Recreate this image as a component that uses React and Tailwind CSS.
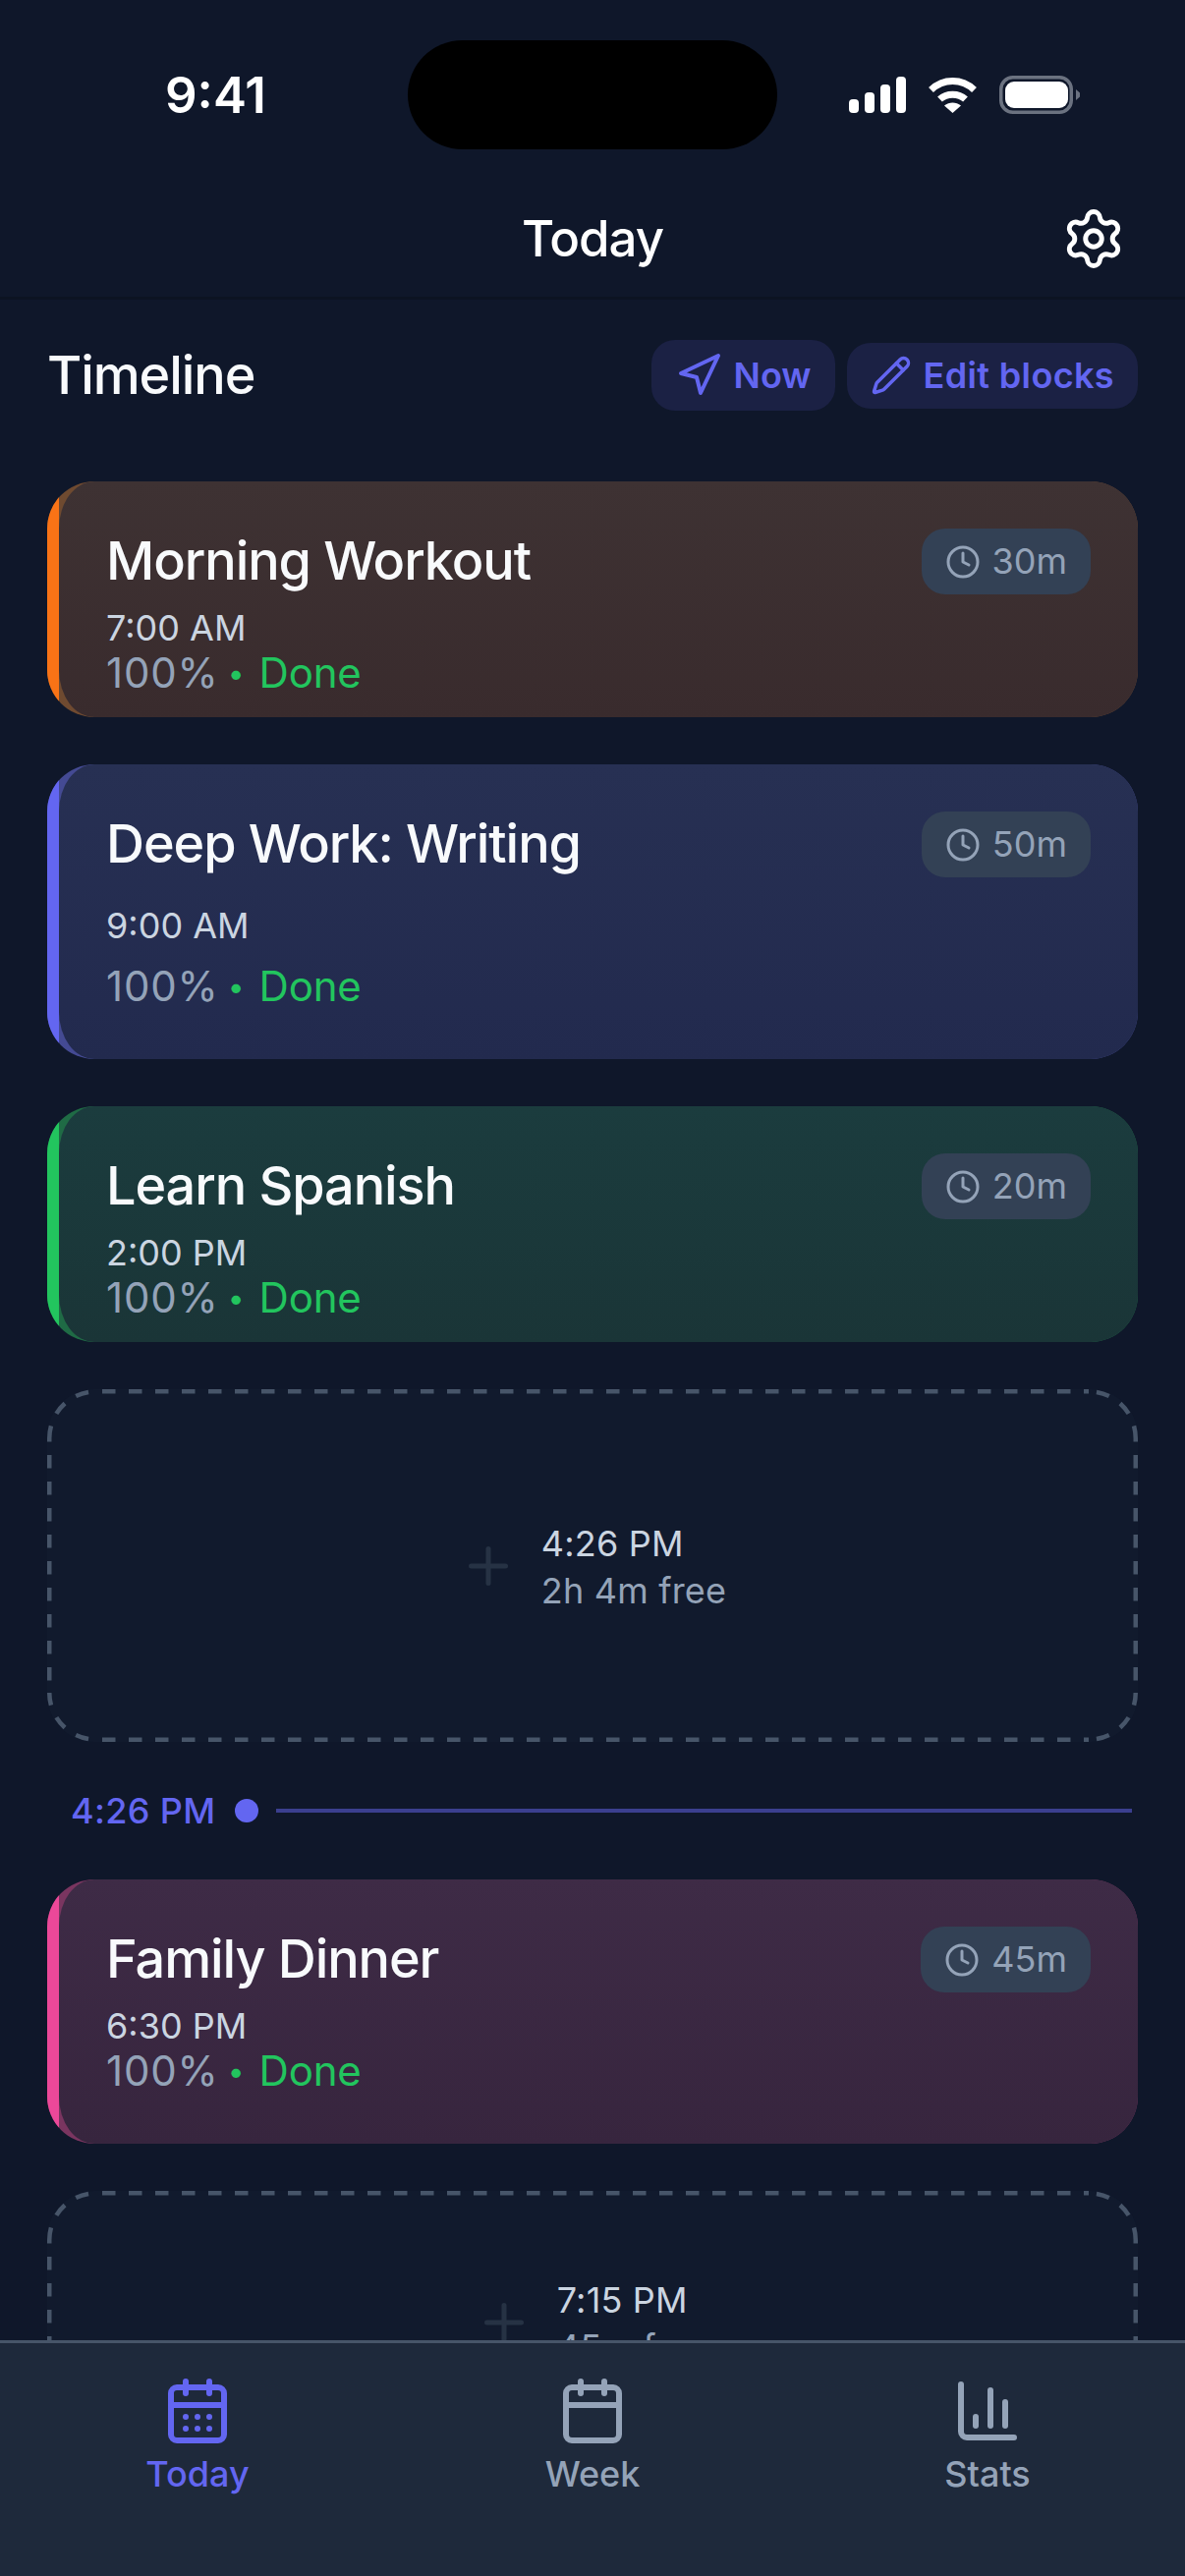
import React from 'react';
import { Settings, Navigation, Pencil, Clock, Plus, Calendar, CalendarDays, ChartColumn } from 'lucide-react';

const blocks = [
  {
    title: 'Morning Workout',
    time: '7:00 AM',
    mins: '30m',
    height: 'h-[240px]',
    stripe: 'bg-[#f97316]',
    corner: 'bg-[#6f4a30]',
    fill: 'from-[#3e3233] to-[#392b2d]',
    timeGap: 'mt-[15px]',
    pctGap: 'mt-0',
  },
  {
    title: 'Deep Work: Writing',
    time: '9:00 AM',
    mins: '50m',
    height: 'h-[300px]',
    stripe: 'bg-[#6366f1]',
    corner: 'bg-[#444a93]',
    fill: 'from-[#273053] to-[#222a4e]',
    timeGap: 'mt-[30px]',
    pctGap: 'mt-[16px]',
  },
  {
    title: 'Learn Spanish',
    time: '2:00 PM',
    mins: '20m',
    height: 'h-[240px]',
    stripe: 'bg-[#22c55e]',
    corner: 'bg-[#1f6b45]',
    fill: 'from-[#1b3c3e] to-[#1a3537]',
    timeGap: 'mt-[15px]',
    pctGap: 'mt-0',
  },
];

const dinner = {
  title: 'Family Dinner',
  time: '6:30 PM',
  mins: '45m',
  height: 'h-[269px]',
  stripe: 'bg-[#ec4899]',
  corner: 'bg-[#7a3560]',
  fill: 'from-[#3e2b46] to-[#37253e]',
  timeGap: 'mt-[15px]',
  pctGap: 'mt-0',
};

function SignalIcon() {
  return (
    <svg width="58" height="37" viewBox="0 0 58 37" fill="#fff">
      <rect x="0" y="23" width="10" height="14" rx="4" />
      <rect x="16" y="16" width="10" height="21" rx="4" />
      <rect x="32" y="8" width="10" height="29" rx="4" />
      <rect x="48" y="0" width="10" height="37" rx="4" />
    </svg>
  );
}

function WifiIcon() {
  return (
    <svg width="51" height="37" viewBox="0 0 51 37" fill="none">
      <path d="M3.5 13.5C16 1.5 35 1.5 47.5 13.5" stroke="#fff" strokeWidth="7" />
      <path d="M12.5 23C19.5 16.5 31.5 16.5 38.5 23" stroke="#fff" strokeWidth="7" />
      <path d="M17 29.5C22 25.5 29 25.5 34 29.5L25.5 37Z" fill="#fff" />
    </svg>
  );
}

function BatteryIcon() {
  return (
    <svg width="83" height="39" viewBox="0 0 83 39" fill="none">
      <rect x="1.75" y="1.75" width="71.5" height="35.5" rx="12" stroke="#6b7280" strokeWidth="3.5" />
      <rect x="6" y="6" width="64" height="27" rx="9" fill="#fff" />
      <path d="M78 14L82 17.5V21.5L78 25Z" fill="#6b7280" />
    </svg>
  );
}

function StatusBar() {
  return (
    <div className="relative flex h-[152px] shrink-0 items-end">
      <div className="flex h-[111px] w-full items-center justify-between pl-[168px] pr-[106px]">
        <span className="text-[51px] leading-none font-semibold text-white">9:41</span>
        <div className="flex items-center gap-[22px]">
          <SignalIcon />
          <WifiIcon />
          <BatteryIcon />
        </div>
      </div>
      <div className="absolute bottom-0 left-1/2 h-[111px] w-[376px] -translate-x-1/2 rounded-full bg-black" />
    </div>
  );
}

function Header() {
  return (
    <div className="relative flex h-[153px] shrink-0 items-center justify-center border-b-[3px] border-[#0c1322] pt-[30px]">
      <span className="text-[51px] leading-none font-[550] tracking-[-0.02em] text-white">Today</span>
      <Settings size={66} color="#ffffff" strokeWidth={1.8} className="absolute right-[60px] top-[58px]" />
    </div>
  );
}

function Toolbar() {
  return (
    <div className="flex h-[113px] shrink-0 items-center justify-between px-12 pt-[41px]">
      <h2 className="text-[54px] leading-none font-[550] tracking-[-0.02em] text-[#f8fafc]">Timeline</h2>
      <div className="flex items-center gap-3">
        <button className="flex items-center gap-3 rounded-[24px] bg-[#1b2144] px-6 py-3 text-[36px] leading-[48px] font-semibold text-[#6366f1]">
          <Navigation size={48} />
          Now
        </button>
        <button className="flex items-center gap-3 rounded-[24px] bg-[#1b2144] px-6 py-3 text-[36px] leading-[43px] font-semibold tracking-[0.01em] text-[#6366f1]">
          <Pencil size={42} />
          Edit blocks
        </button>
      </div>
    </div>
  );
}

function BlockCard({ block }) {
  return (
    <div className={`flex shrink-0 overflow-hidden rounded-[48px] ${block.height} ${block.corner}`}>
      <div className={`w-3 shrink-0 ${block.stripe}`} />
      <div className={`flex flex-1 items-start justify-between rounded-l-[36px_48px] bg-linear-to-b px-12 pt-12 ${block.fill}`}>
        <div className="flex flex-col">
          <h3 className="text-[54px] leading-[65px] font-[550] tracking-[-0.02em] text-[#f8fafc]">{block.title}</h3>
          <span className={`text-[36px] leading-[42px] text-[#cbd5e1] ${block.timeGap}`}>{block.time}</span>
          <div className={`flex items-center text-[42px] leading-[50px] ${block.pctGap}`}>
            <span className="tracking-[0.02em] text-[#94a3b8]">100%</span>
            <span className="ml-[9px] text-[30px] text-[#22c55e]">•</span>
            <span className="ml-[15px] tracking-[-0.005em] text-[#22c55e]">Done</span>
          </div>
        </div>
        <div className="flex items-center gap-3 rounded-[24px] bg-[#334155] px-6 py-3 text-[36px] leading-[43px] text-[#94a3b8]">
          <Clock size={36} />
          {block.mins}
        </div>
      </div>
    </div>
  );
}

function DashedOutline({ width, height }) {
  const w = width;
  const h = height;
  const dash = { stroke: '#475569', strokeWidth: 4.5, strokeDasharray: '13.5 13.5', fill: 'none' };
  return (
    <svg className="absolute inset-0" width={w} height={h} viewBox={`0 0 ${w} ${h}`}>
      <path d={`M50 2.25H${w - 50}`} {...dash} strokeDashoffset="-6" />
      <path d={`M50 ${h - 2.25}H${w - 50}`} {...dash} strokeDashoffset="-6" />
      <path d={`M2.25 50V${h - 50}`} {...dash} strokeDashoffset="-17" />
      <path d={`M${w - 2.25} 50V${h - 50}`} {...dash} strokeDashoffset="-17" />
      <path d="M50 2.25A47.75 47.75 0 0 0 2.25 50" {...dash} strokeDashoffset="-8" />
      <path d={`M${w - 50} 2.25A47.75 47.75 0 0 1 ${w - 2.25} 50`} {...dash} strokeDashoffset="-8" />
      <path d={`M50 ${h - 2.25}A47.75 47.75 0 0 1 2.25 ${h - 50}`} {...dash} strokeDashoffset="-8" />
      <path d={`M${w - 50} ${h - 2.25}A47.75 47.75 0 0 0 ${w - 2.25} ${h - 50}`} {...dash} strokeDashoffset="-8" />
    </svg>
  );
}

function FreeSlot({ time, free, height, className }) {
  return (
    <div className={`relative flex shrink-0 items-center justify-center gap-6 rounded-[48px] bg-[#111a2d] ${className}`}>
      <DashedOutline width={1110} height={height} />
      <Plus size={60} color="#263244" />
      <div className="flex flex-col gap-[5px] pt-[3px] text-[36px] leading-[43px] tracking-[0.005em]">
        <span className="text-[#cbd5e1]">{time}</span>
        <span className="text-[#94a3b8]">{free}</span>
      </div>
    </div>
  );
}

function NowLine() {
  return (
    <div className="flex h-[44px] shrink-0 items-center pl-6 text-[36px] font-medium tracking-[0.01em] text-[#6366f1]">
      <span className="leading-[44px]">4:26 PM</span>
      <span className="ml-[20px] h-6 w-6 shrink-0 rounded-full bg-[#6366f1]" />
      <span className="ml-[18px] mr-[6px] h-[4.5px] flex-1 bg-[#3b3f8f]" />
    </div>
  );
}

function NavItem({ icon: Icon, label, active }) {
  return (
    <div className={`flex flex-1 flex-col items-center ${active ? 'text-[#6366f1]' : 'text-[#94a3b8]'}`}>
      <Icon size={72} />
      <span className="mt-[7px] text-[36px] leading-[43px] font-medium">{label}</span>
    </div>
  );
}

export default function App() {
  return (
    <div className="flex h-[2622px] w-full flex-col overflow-hidden bg-[#0f172a] font-[Inter,sans-serif]">
      <StatusBar />
      <Header />
      <div className="flex min-h-0 flex-1 flex-col overflow-hidden">
        <Toolbar />
        <div className="flex flex-col gap-12 px-12 pt-[72px]">
          {blocks.map((block) => (
            <BlockCard key={block.title} block={block} />
          ))}
          <FreeSlot time="4:26 PM" free="2h 4m free" height={359} className="h-[359px]" />
          <NowLine />
          <BlockCard block={dinner} />
          <FreeSlot time="7:15 PM" free="45m free" height={268} className="h-[268px]" />
        </div>
      </div>
      <nav className="flex h-[240px] shrink-0 items-start border-t-[3px] border-[#475569] bg-[#1e293b] pt-[33px]">
        <NavItem icon={CalendarDays} label="Today" active />
        <NavItem icon={Calendar} label="Week" />
        <NavItem icon={ChartColumn} label="Stats" />
      </nav>
    </div>
  );
}
